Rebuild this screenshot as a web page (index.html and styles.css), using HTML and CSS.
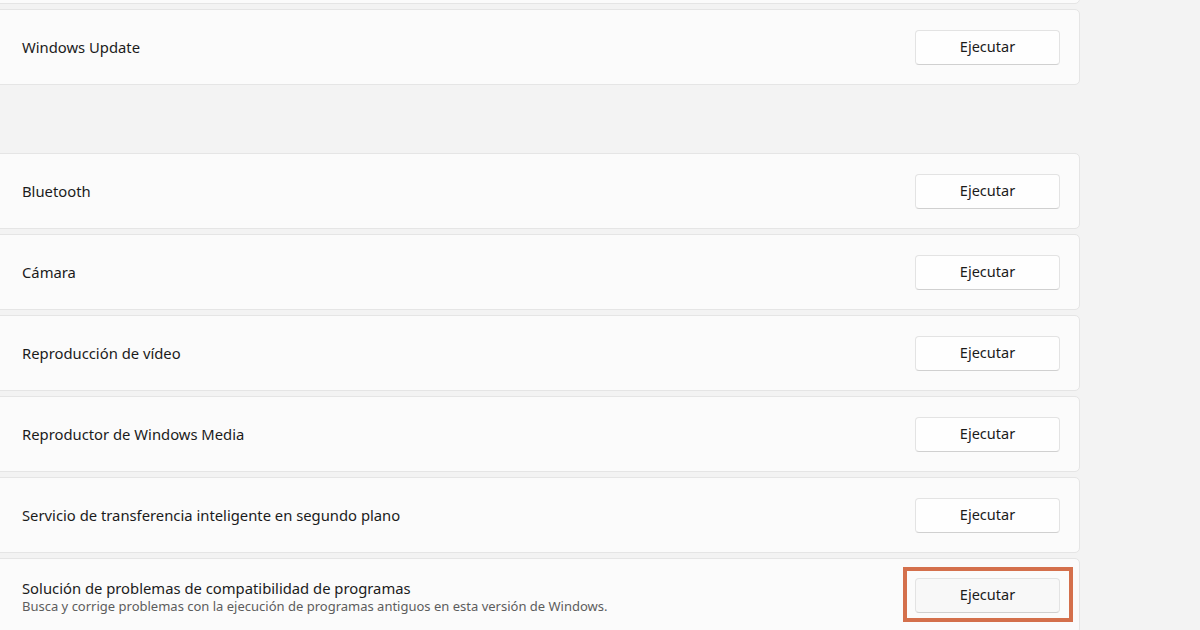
FILE: index.html
```html
<!DOCTYPE html>
<html lang="es">
<head>
<meta charset="utf-8">
<title>Solucionar problemas</title>
<link rel="stylesheet" href="styles.css">
</head>
<body>
<main class="page">
  <section class="group">
    <div class="card card-partial"></div>
    <div class="card">
      <div class="card-text"><div class="title">Windows Update</div></div>
      <button class="btn">Ejecutar</button>
    </div>
  </section>
  <section class="group group-second">
    <div class="card">
      <div class="card-text"><div class="title">Bluetooth</div></div>
      <button class="btn">Ejecutar</button>
    </div>
    <div class="card">
      <div class="card-text"><div class="title">Cámara</div></div>
      <button class="btn">Ejecutar</button>
    </div>
    <div class="card">
      <div class="card-text"><div class="title">Reproducción de vídeo</div></div>
      <button class="btn">Ejecutar</button>
    </div>
    <div class="card">
      <div class="card-text"><div class="title">Reproductor de Windows Media</div></div>
      <button class="btn">Ejecutar</button>
    </div>
    <div class="card">
      <div class="card-text"><div class="title">Servicio de transferencia inteligente en segundo plano</div></div>
      <button class="btn">Ejecutar</button>
    </div>
    <div class="card">
      <div class="card-text">
        <div class="title">Solución de problemas de compatibilidad de programas</div>
        <div class="desc">Busca y corrige problemas con la ejecución de programas antiguos en esta versión de Windows.</div>
      </div>
      <div class="highlight"><button class="btn btn-hover">Ejecutar</button></div>
    </div>
  </section>
</main>
</body>
</html>
```

FILE: styles.css
```css
* { box-sizing: border-box; }
html, body { margin: 0; padding: 0; }
body {
  background: #f3f3f3;
  font-family: "Noto Sans", "Open Sans", sans-serif;
  color: #1b1b1b;
  width: 1200px;
  height: 630px;
  overflow: hidden;
}
.page {
  display: flex;
  flex-direction: column;
  margin-left: -10px;
  width: 1090px;
}
.group {
  display: flex;
  flex-direction: column;
  gap: 5px;
}
.group-second { margin-top: 68px; }
.card {
  height: 76px;
  background: #fbfbfb;
  border: 1px solid #e5e5e5;
  border-radius: 5px;
  display: flex;
  align-items: center;
  justify-content: space-between;
  padding: 0 19px 0 31px;
}
.card-partial { margin-top: -72px; }
.card-text { display: flex; flex-direction: column; }
.title {
  font-size: 14.8px;
  line-height: 20px;
  color: #1b1b1b;
}
.desc {
  font-size: 13px;
  line-height: 17px;
  color: #5d5d5d;
}
.btn {
  width: 145px;
  height: 35px;
  background: #fefefe;
  border: 1px solid #e3e3e3;
  border-bottom-color: #d0d0d0;
  border-radius: 4px;
  font-family: "Noto Sans", "Open Sans", sans-serif;
  font-size: 14.5px;
  color: #1b1b1b;
  padding: 0 0 2px;
}
.btn-hover { background: #f8f8f8; }
.highlight {
  border: 4px solid #d4704c;
  padding: 7px 9px 5px 8px;
  margin-right: -13px;
  margin-bottom: 4px;
  display: flex;
}
```
